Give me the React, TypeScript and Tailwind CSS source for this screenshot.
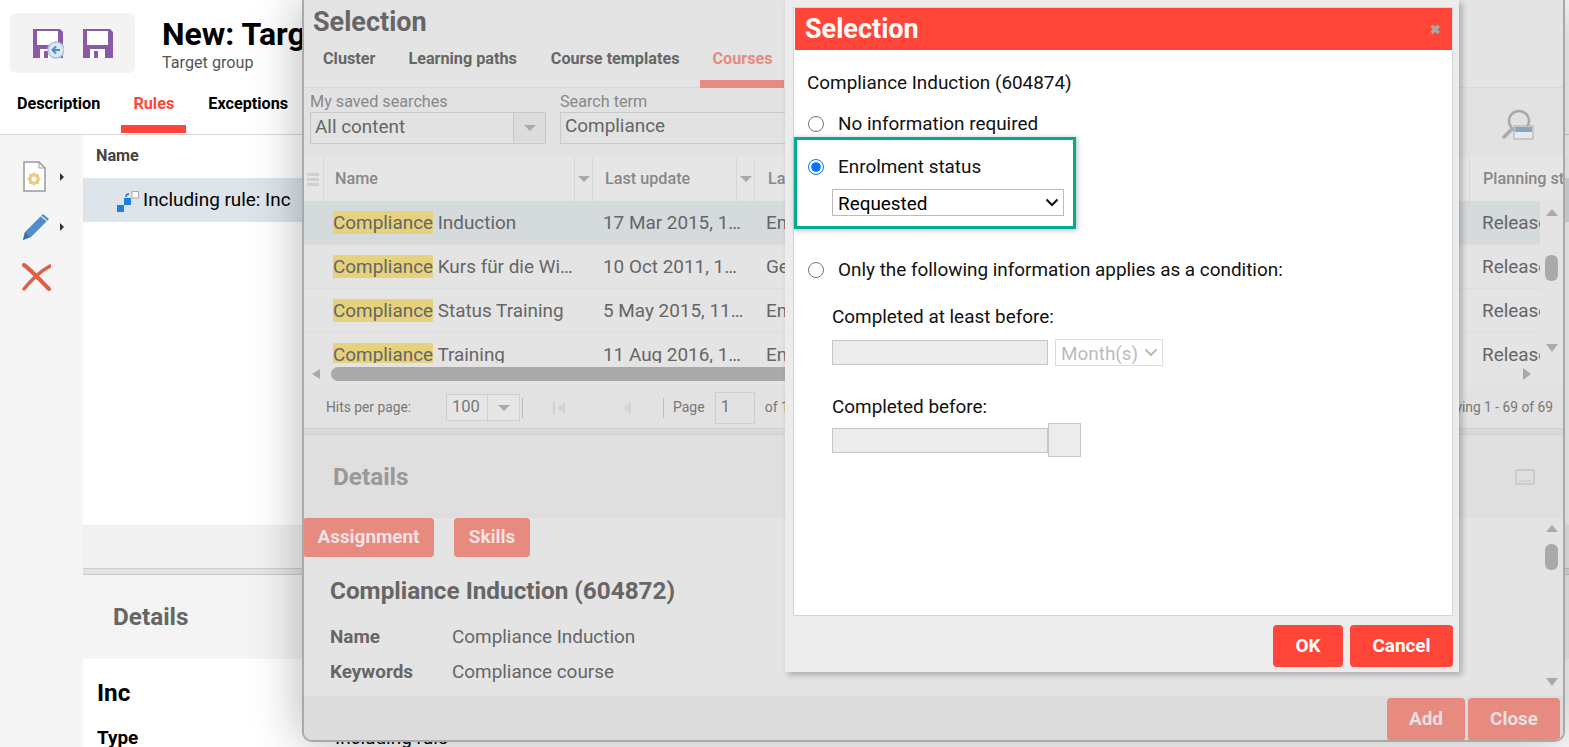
import React from "react";

const Floppy = ({ badge }: { badge?: boolean }) => (
  <svg width="32" height="31" viewBox="0 0 32 31">
    <path d="M1 1h27l3 3v26H1z" fill="#8a5aa8" />
    <rect x="5" y="3" width="21" height="14" fill="#fff" />
    <rect x="8" y="21" width="15" height="9" fill="#fff" />
    <rect x="12" y="23" width="4" height="7" fill="#8a5aa8" />
    {badge && (
      <g>
        <circle cx="24" cy="22" r="8" fill="#dbe8f3" stroke="#a5c5df" strokeWidth="1.5" />
        <path d="M28 22h-7M24 18.5 20.5 22l3.5 3.5" fill="none" stroke="#4e8cc4" strokeWidth="2" />
      </g>
    )}
  </svg>
);

const Caret = ({ className }: { className: string }) => (
  <span className={`inline-block h-0 w-0 border-x-[6px] border-t-[6px] border-x-transparent ${className}`} />
);

const Chevron = ({ color }: { color: string }) => (
  <svg width="14" height="9" viewBox="0 0 14 9" className="pointer-events-none absolute right-[5px] top-[9px]">
    <path d="M1.5 1.5 7 7l5.500-5.500" fill="none" stroke={color} strokeWidth="2" />
  </svg>
);

const Row = ({ rest, date, third, selected }: { rest: string; date: string; third: string; selected?: boolean }) => (
  <div className={`flex h-[44px] shrink-0 items-center border-b border-[#dcdcdc] pt-[2px] text-[18.9px] text-[#666] ${selected ? "bg-[#d5dadd]" : ""}`}>
    <div className="w-[29px] shrink-0" />
    <div className="mr-[29px] w-[241px] shrink-0 truncate">
      <span className="bg-[#e6d27c]">Compliance</span> {rest}
    </div>
    <div className="mr-[22px] w-[141px] shrink-0 truncate">{date}</div>
    <div className="w-[716px] shrink-0">{third}</div>
    <div className="w-[58px] shrink-0 overflow-hidden whitespace-nowrap">Released</div>
  </div>
);

export default function App() {
  return (
    <div className="relative h-[747px] w-[1569px] overflow-hidden bg-white font-['Roboto',sans-serif]">
      {/* Background page */}
      <div className="flex h-[135px] flex-col border-b border-[#d8d8d8]">
        <div className="flex h-[90px] items-start">
          <div className="ml-[10px] mt-[13px] flex h-[60px] w-[125px] items-center gap-[18px] rounded-[6px] bg-[#f3f3f3] pl-[22px]">
            <Floppy badge />
            <Floppy />
          </div>
          <div className="ml-[27px] mt-[14px]">
            <div className="text-[32px] font-bold leading-[40px] text-black">New: Target group</div>
            <div className="text-[16.2px] leading-[17px] text-[#555]">Target group</div>
          </div>
        </div>
        <div className="flex h-[44px] text-[16.2px] font-bold text-black">
          <div className="ml-[17px] pt-[2px]">Description</div>
          <div className="ml-[21px] h-[43px] w-[65px] border-b-[8px] border-[#ff4639] pt-[2px] text-center text-[#ff4639]">Rules</div>
          <div className="ml-[22px] pt-[2px]">Exceptions</div>
        </div>
      </div>
      <div className="flex h-[612px]">
        <div className="flex w-[83px] shrink-0 flex-col bg-[#f5f5f5] pl-[22px] pt-[26px]">
          <div className="flex h-[51px] items-start gap-[13px]">
            <svg width="25" height="31" viewBox="0 0 25 31">
              <path d="M2 1h15l6 6v23H2z" fill="#fff" stroke="#999" strokeWidth="1.5" />
              <path d="M17 1v6h6" fill="none" stroke="#999" />
              <path d="M7 13h3l2-2 2 2h3v3l2 2-2 2v3h-3l-2 2-2-2H7v-3l-2-2 2-2z" fill="#eccb85" />
              <circle cx="12" cy="18" r="2.5" fill="#fff" />
            </svg>
            <span className="mt-[12px] h-0 w-0 border-y-[4px] border-l-[4px] border-y-transparent border-l-[#333]" />
          </div>
          <div className="flex h-[51px] items-start gap-[10px]">
            <svg width="28" height="29" viewBox="0 0 28 29">
              <path d="M1 28l2-8L21 2l6 5L9 25z" fill="#4f8cc9" />
              <path d="M1 28l2-8 5 5z" fill="#3a6ea5" />
              <path d="M19 4l6 5" stroke="#cfe0f0" strokeWidth="1.5" />
            </svg>
            <span className="mt-[11px] h-0 w-0 border-y-[4px] border-l-[4px] border-y-transparent border-l-[#333]" />
          </div>
          <svg width="29" height="28" viewBox="0 0 29 28">
            <path d="M2 2c6 4 13 12 25 24" fill="none" stroke="#dd6046" strokeWidth="4" strokeLinecap="round" />
            <path d="M28 3C19 8 10 16 2 26" fill="none" stroke="#dd6046" strokeWidth="3.5" strokeLinecap="round" />
          </svg>
        </div>
        <div className="flex min-w-0 flex-1 flex-col">
          <div className="flex h-[43px] shrink-0 items-center pl-[13px] text-[16.2px] font-bold text-[#444]">Name</div>
          <div className="flex h-[44px] shrink-0 items-center bg-[#dde5eb] pl-[34px] pt-[1px] text-[18.9px] text-black">
            <svg width="22" height="22" viewBox="0 0 22 22" className="mr-[4px] mt-[3px]">
              <rect x="0" y="14" width="7" height="7" fill="#1f7fe0" />
              <rect x="7" y="7" width="7" height="7" fill="#1f7fe0" />
              <rect x="15" y="0.5" width="6.500" height="6.500" fill="#fff" stroke="#aaa" />
              <path d="M9 6c0-2 1-3 3-3" fill="none" stroke="#2c5fa8" strokeWidth="1.300" />
            </svg>
            Including rule: Inc
          </div>
          <div className="h-[303px] shrink-0" />
          <div className="h-[43px] shrink-0 border-t border-[#eee] bg-[#f1f1f1]" />
          <div className="h-[7px] shrink-0 border-y border-[#ccc] bg-[#e4e4e4]" />
          <div className="flex h-[84px] shrink-0 items-center bg-[#f4f4f4] pl-[30px] text-[24.3px] font-bold text-[#666]">Details</div>
          <div className="pl-[14px] pt-[19px]">
            <div className="text-[24.3px] font-bold leading-[30px] text-black">Inc</div>
            <div className="mt-[18px] flex text-[18.9px] leading-[24px] text-black">
              <span className="w-[238px] font-bold">Type</span>
              <span>Including rule</span>
            </div>
          </div>
        </div>
      </div>

      {/* Selection modal */}
      <div className="absolute left-[302px] top-0 flex h-[742px] w-[1263px] flex-col overflow-hidden rounded-b-[10px] border-x-[2px] border-b-[2px] border-[#a9a9a9] bg-[#e4e4e4] shadow-[0_0_50px_rgba(0,0,0,0.3)]">
        <div className="h-[88px] shrink-0 border-b border-[#d8d8d8]">
          <div className="pl-[9px] pt-[6px] text-[27px] font-bold leading-[33px] text-[#666]">Selection</div>
          <div className="mt-[8px] flex text-[16.2px] font-bold text-[#666]">
            <div className="ml-[19px]">Cluster</div>
            <div className="ml-[33px]">Learning paths</div>
            <div className="ml-[34px]">Course templates</div>
            <div className="ml-[21px] h-[41px] w-[84px] border-b-[8px] border-[#e78a80] text-center text-[#e78a80]">Courses</div>
          </div>
        </div>
        <div className="relative flex h-[69px] shrink-0 gap-[14px] bg-[#e2e2e2] pl-[6px] pt-[4px] text-[#888]">
          <div>
            <div className="text-[16.2px] leading-[20px]">My saved searches</div>
            <div className="flex h-[32px] w-[236px] items-center border border-[#c8c8c8] pb-[1px] text-[18.9px] text-[#666]">
              <span className="flex-1 pl-[4px]">All content</span>
              <span className="flex h-full w-[32px] items-center justify-center border-l border-[#c8c8c8] bg-[#dcdcdc]">
                <Caret className="border-t-[#aaa]" />
              </span>
            </div>
          </div>
          <div>
            <div className="text-[16.2px] leading-[20px]">Search term</div>
            <div className="flex h-[32px] w-[300px] items-center border border-[#c8c8c8] pb-[3px] pl-[4px] text-[18.9px] text-[#666]">Compliance</div>
          </div>
          <svg width="32" height="32" viewBox="0 0 32 32" className="absolute right-[29px] top-[21px]">
            <circle cx="17" cy="12" r="10" fill="none" stroke="#a9a9a9" strokeWidth="2.500" />
            <path d="M2 28l8-8" stroke="#a9a9a9" strokeWidth="3.500" strokeLinecap="round" />
            <rect x="12" y="17" width="19" height="13" fill="#e8e8e8" stroke="#a9a9a9" />
            <rect x="13" y="18" width="17" height="5" fill="#8aa5c4" />
          </svg>
        </div>
        <div className="flex h-[44px] shrink-0 items-center bg-[#e6e6e6] text-[16.2px] font-medium text-[#888]">
          <div className="flex h-full w-[20px] shrink-0 flex-col items-center justify-center gap-[2px] border-r border-[#d8d8d8] pr-[2px]">
            <span className="h-[3px] w-[12px] bg-[#cfcfcf]" />
            <span className="h-[3px] w-[12px] bg-[#cfcfcf]" />
            <span className="h-[3px] w-[12px] bg-[#cfcfcf]" />
          </div>
          <div className="flex h-full w-[251px] shrink-0 items-center border-r border-[#d8d8d8] pl-[11px]">Name</div>
          <div className="flex h-full w-[18px] shrink-0 items-center justify-center border-r border-[#d8d8d8]">
            <Caret className="border-t-[#aaa]" />
          </div>
          <div className="flex h-full w-[144px] shrink-0 items-center border-r border-[#d8d8d8] pl-[12px]">Last update</div>
          <div className="flex h-full w-[18px] shrink-0 items-center justify-center border-r border-[#d8d8d8]">
            <Caret className="border-t-[#aaa]" />
          </div>
          <div className="flex h-full w-[715px] shrink-0 items-center border-r border-[#d8d8d8] pl-[13px]">La</div>
          <div className="overflow-hidden whitespace-nowrap pl-[13px]">Planning status</div>
        </div>
        <div className="relative flex h-[162px] shrink-0 flex-col overflow-hidden">
          <Row selected rest="Induction" date="17 Mar 2015, 10:12" third="En" />
          <Row rest="Kurs für die Wirtschaft" date="10 Oct 2011, 14:20" third="Ge" />
          <Row rest="Status Training" date="5 May 2015, 11:03" third="En" />
          <Row rest="Training" date="11 Aug 2016, 15:40" third="En" />
          <div className="absolute right-0 top-0 flex h-full w-[23px] flex-col items-center bg-[#e4e4e4] pt-[8px]">
            <span className="h-0 w-0 border-x-[6px] border-b-[7px] border-x-transparent border-b-[#aaa]" />
            <span className="mt-[39px] h-[26px] w-[13px] rounded-[6px] bg-[#aaa]" />
            <span className="mt-[63px] h-0 w-0 border-x-[6px] border-t-[8px] border-x-transparent border-t-[#aaa]" />
          </div>
        </div>
        <div className="flex h-[22px] shrink-0 items-center pl-[8px]">
          <span className="h-0 w-0 border-y-[5px] border-r-[8px] border-y-transparent border-r-[#aaa]" />
          <span className="ml-[11px] h-[14px] w-[1050px] rounded-[7px] bg-[#aaa]" />
          <span className="ml-auto mr-[32px] h-0 w-0 border-y-[6px] border-l-[8px] border-y-transparent border-l-[#aaa]" />
        </div>
        <div className="flex h-[43px] shrink-0 items-center bg-[#e2e2e2] pt-[2px] text-[#777]">
          <span className="ml-[22px] w-[120px] text-[13.8px]">Hits per page:</span>
          <div className="flex h-[27px] w-[74px] items-center border border-[#cfcfcf] bg-[#e6e6e6] text-[16.5px]">
            <span className="flex-1 pl-[5px]">100</span>
            <span className="flex h-full w-[32px] items-center justify-center border-l border-[#cfcfcf]">
              <Caret className="border-t-[#aaa]" />
            </span>
          </div>
          <span className="ml-[2px] h-[20px] w-px bg-[#bbb]" />
          <svg width="14" height="14" viewBox="0 0 14 14" className="ml-[29px]">
            <path d="M1 1h2v12H1zM13 1v12L5 7z" fill="#d2d2d2" />
          </svg>
          <span className="ml-[58px] h-0 w-0 border-y-[6px] border-r-[7px] border-y-transparent border-r-[#d2d2d2]" />
          <span className="ml-[32px] h-[20px] w-px bg-[#bbb]" />
          <span className="ml-[9px] text-[14px]">Page</span>
          <span className="ml-[10px] flex h-[32px] w-[40px] items-center border border-[#cfcfcf] pl-[5px] text-[16.5px]">1</span>
          <span className="ml-[10px] text-[14px]">of 1</span>
          <span className="ml-auto mr-[10px] text-[13.8px]">Displaying 1 - 69 of 69</span>
        </div>
        <div className="h-[7px] shrink-0 border-y border-[#cfcfcf] bg-[#d9d9d9]" />
        <div className="relative flex h-[83px] shrink-0 items-center bg-[#dfdfdf] pl-[29px] pt-[2px] text-[24.3px] font-bold text-[#999]">
          Details
          <svg width="20" height="16" viewBox="0 0 20 16" className="absolute right-[28px] top-[34px]">
            <rect x="1" y="1" width="18" height="14" rx="1" fill="none" stroke="#c4c4c4" strokeWidth="1.300" />
            <path d="M4 12h12" stroke="#c4c4c4" />
          </svg>
        </div>
        <div className="relative h-[178px] shrink-0">
          <div className="flex">
            <div className="ml-[-1px] flex h-[39px] w-[131px] items-center justify-center rounded-[4px] bg-[#e78a80] text-[18.9px] font-bold text-[#f2e2e2]">Assignment</div>
            <div className="ml-[20px] flex h-[39px] w-[76px] items-center justify-center rounded-[4px] bg-[#e78a80] text-[18.9px] font-bold text-[#f2e2e2]">Skills</div>
          </div>
          <div className="ml-[26px] mt-[18px] text-[24.3px] font-bold leading-[32px] text-[#666]">Compliance Induction (604872)</div>
          <div className="ml-[26px] mt-[13px] flex h-[35px] items-center text-[18.9px] text-[#666]">
            <span className="w-[122px] font-bold">Name</span>Compliance Induction
          </div>
          <div className="ml-[26px] flex h-[35px] items-center text-[18.9px] text-[#666]">
            <span className="w-[122px] font-bold">Keywords</span>Compliance course
          </div>
          <div className="absolute right-[5px] top-0 flex h-full w-[13px] flex-col items-center pt-[7px]">
            <span className="h-0 w-0 border-x-[6px] border-b-[7px] border-x-transparent border-b-[#aaa]" />
            <span className="mt-[12px] h-[26px] w-[13px] shrink-0 rounded-[6px] bg-[#aaa]" />
            <span className="mt-[108px] h-0 w-0 border-x-[6px] border-t-[8px] border-x-transparent border-t-[#aaa]" />
          </div>
        </div>
        <div className="flex flex-1 items-start justify-end gap-[3px] bg-[#dcdcdc] pr-[3px] pt-[2px]">
          <div className="flex h-[43px] w-[78px] items-center justify-center rounded-[4px] bg-[#e78a80] text-[18.9px] font-bold text-[#e8e0e0]">Add</div>
          <div className="flex h-[43px] w-[92px] items-center justify-center rounded-[4px] bg-[#e78a80] text-[18.9px] font-bold text-[#e8e0e0]">Close</div>
        </div>
      </div>

      {/* Inner dialog */}
      <div className="absolute left-[785px] top-0 flex h-[672px] w-[674px] flex-col bg-[#ececec] pl-[8px] pr-[6px] pt-[7px] shadow-[3px_3px_6px_rgba(0,0,0,0.25)]">
        <div className="flex h-[609px] flex-col border border-[#d4d4d4] bg-white">
          <div className="ml-[1px] flex h-[42px] shrink-0 items-center justify-between bg-[#ff4639] pl-[10px] pr-[11px] text-[27px] font-bold text-white">
            Selection
            <span className="text-[13px] font-bold leading-none text-[#a8a8a8]">✖</span>
          </div>
          <div className="relative flex-1 text-[18.9px] text-[#111]">
            <div className="pl-[13px] pt-[21px] leading-[24px]">Compliance Induction (604874)</div>
            <label className="mt-[17px] flex h-[24px] items-center pl-[14px]">
              <input type="radio" name="cond" className="m-0 h-[16px] w-[16px]" />
              <span className="ml-[14px]">No information required</span>
            </label>
            <div className="relative z-10 mt-[1px] h-[92px] w-[282px] border-[3px] border-[#00ac8c] bg-white pl-[11px] shadow-[1px_1px_5px_rgba(0,0,0,0.3)]">
              <label className="mt-[15px] flex h-[24px] items-center">
                <input type="radio" name="cond" defaultChecked className="m-0 h-[16px] w-[16px] accent-[#0075ff]" />
                <span className="ml-[14px]">Enrolment status</span>
              </label>
              <div className="relative ml-[24px] mt-[10px] h-[27px] w-[232px]">
                <select defaultValue="Requested" className="h-full w-full appearance-none border border-[#bbb] bg-white pl-[5px] text-black">
                  <option>Requested</option>
                </select>
                <Chevron color="#111" />
              </div>
            </div>
            <label className="mt-[29px] flex h-[24px] items-center pl-[14px]">
              <input type="radio" name="cond" className="m-0 h-[16px] w-[16px]" />
              <span className="ml-[14px]">Only the following information applies as a condition:</span>
            </label>
            <div className="ml-[38px] mt-[23px] leading-[24px]">Completed at least before:</div>
            <div className="ml-[38px] mt-[10px] flex items-center">
              <input disabled className="h-[25px] w-[216px] border border-[#c8c8c8] bg-[#ececec]" />
              <div className="relative ml-[7px] h-[27px] w-[108px]">
                <select disabled defaultValue="Month(s)" className="h-full w-full appearance-none border border-[#ddd] bg-white pl-[5px] text-[#bbb]">
                  <option>Month(s)</option>
                </select>
                <Chevron color="#bbb" />
              </div>
            </div>
            <div className="ml-[38px] mt-[29px] leading-[24px]">Completed before:</div>
            <div className="ml-[38px] mt-[4px] flex items-center">
              <input disabled className="h-[25px] w-[216px] border border-[#c8c8c8] bg-[#ececec]" />
              <span className="h-[34px] w-[33px] border border-[#c8c8c8] bg-[#ececec]" />
            </div>
          </div>
        </div>
        <div className="mt-[9px] flex justify-end gap-[7px]">
          <div className="flex h-[42px] w-[70px] items-center justify-center rounded-[4px] bg-[#ff4639] text-[18.9px] font-bold text-white">OK</div>
          <div className="flex h-[42px] w-[103px] items-center justify-center rounded-[4px] bg-[#ff4639] text-[18.9px] font-bold text-white">Cancel</div>
        </div>
      </div>
    </div>
  );
}
